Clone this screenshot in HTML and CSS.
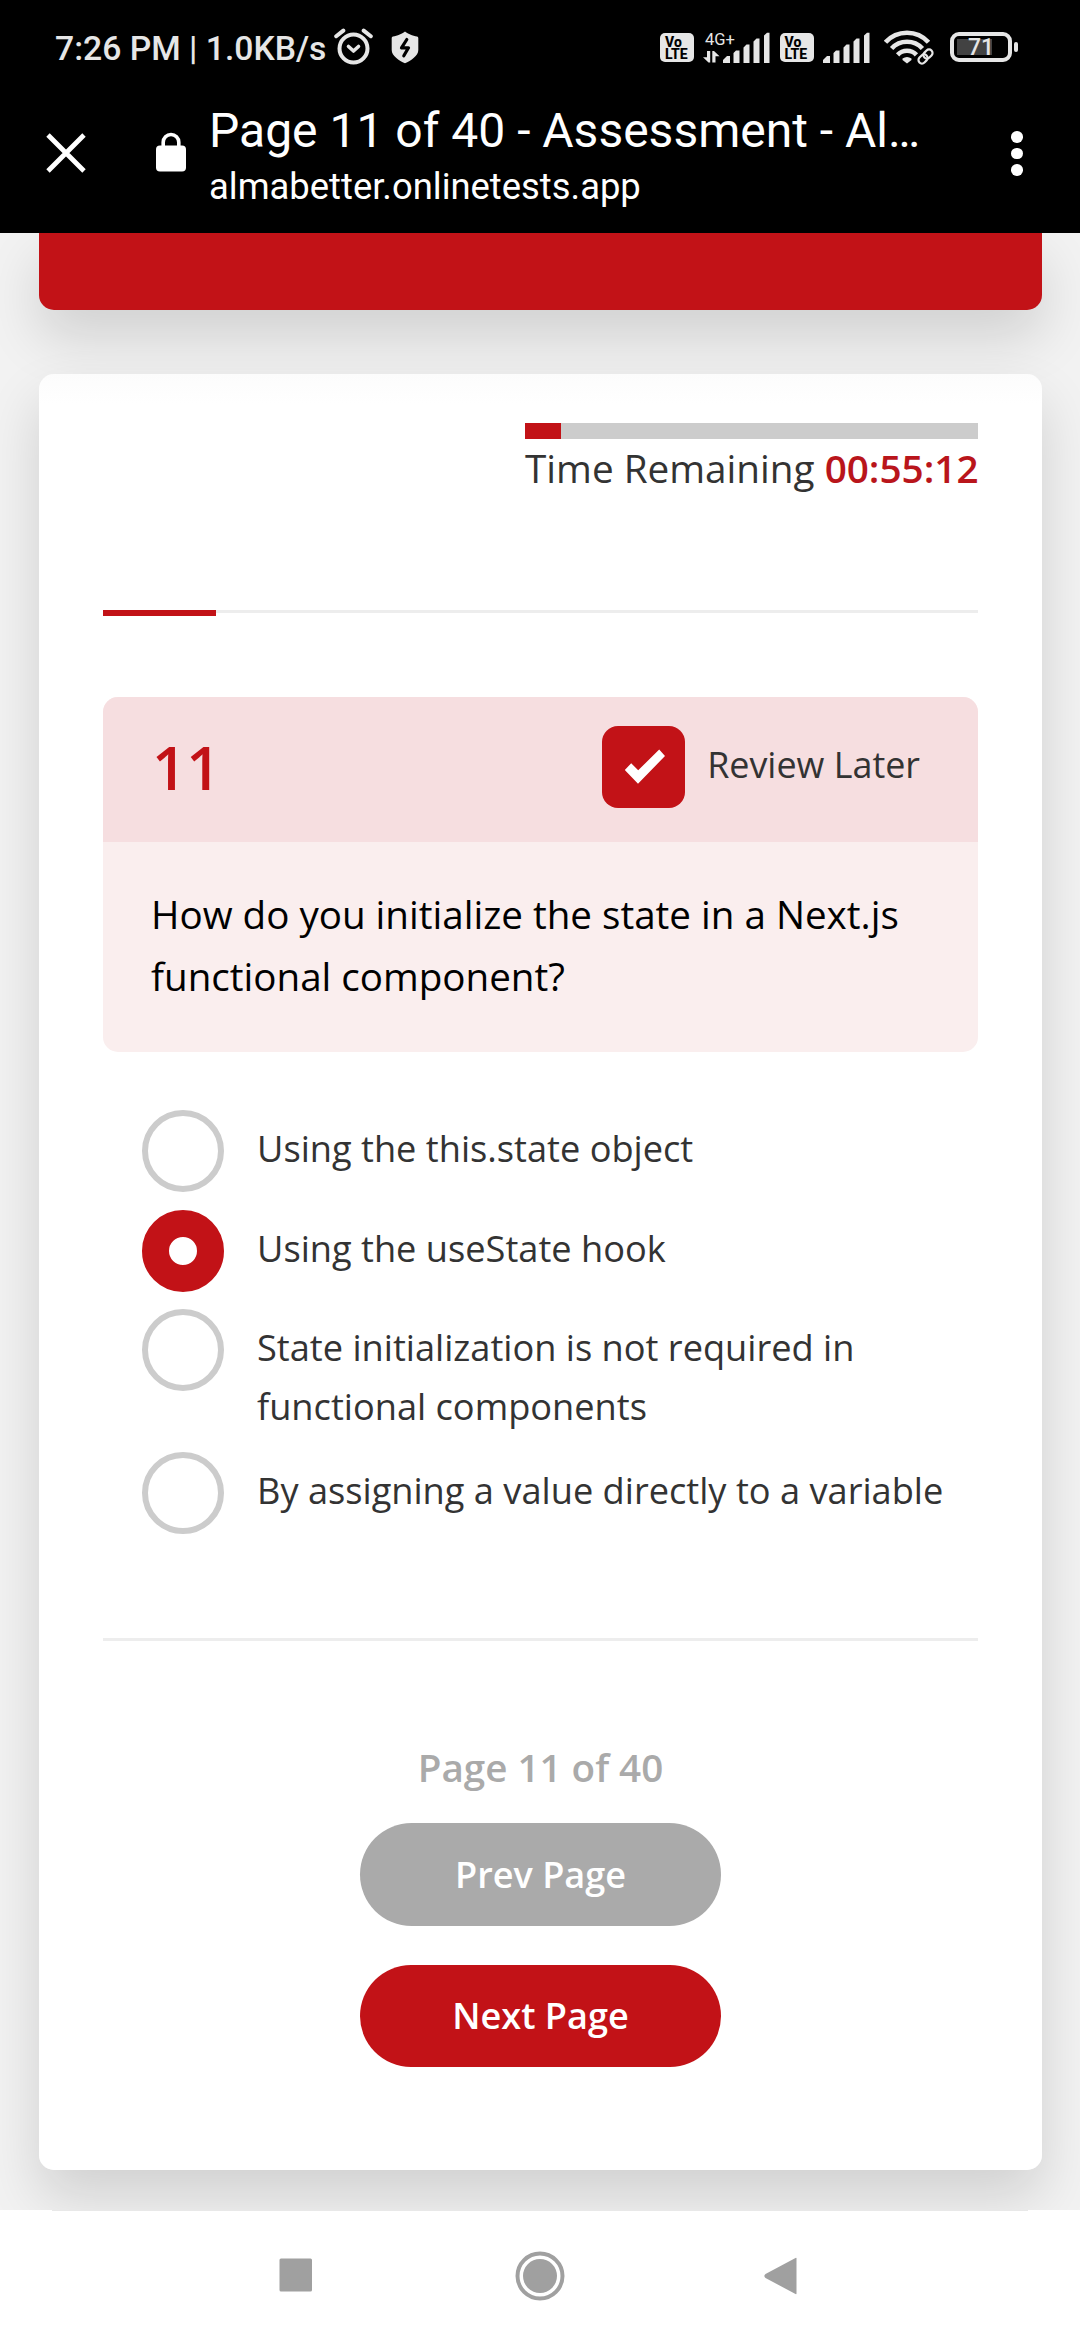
FILE: index.html
```html
<!DOCTYPE html>
<html lang="en">
<head>
<meta charset="utf-8">
<title>Page 11 of 40 - Assessment - AlmaBetter</title>
<link rel="stylesheet" href="styles.css">
</head>
<body>
<div class="screen">
  <header class="chrome">
    <div class="status">
      <span class="clock">7:26 PM | 1.0KB/s</span>
      <svg class="alarm" width="40" height="38" viewBox="0 0 40 38" fill="none" stroke="#e6e6e6" stroke-linecap="round">
        <circle cx="19.5" cy="20.5" r="14" stroke-width="4"/>
        <path d="M2.2 8.2 9.3 2.6M36.8 8.2 29.7 2.6" stroke-width="4"/>
        <path d="M14.5 18.5 19.5 23 24.5 18.5" stroke-width="3.6" stroke-linejoin="round"/>
      </svg>
      <svg class="shield" width="28" height="33" viewBox="0 0 28 33">
        <path d="M14 .5C16 2.500 22 5 26 5.500Q27.300 5.800 27.300 7V19C27.300 25 20 29.500 14 32.300 8 29.500 .7 25 .7 19V7Q.7 5.800 2 5.500C6 5 12 2.500 14 .5Z" fill="#e6e6e6"/>
        <path d="M15.800 8.500 10.500 16.800H17.500L12.800 24.800" fill="none" stroke="#000" stroke-width="3.200" stroke-linejoin="round" stroke-linecap="round"/>
      </svg>
      <span class="volte first"><span>Vo</span><span>LTE</span></span>
      <span class="network">
        <span class="net-label">4G+</span>
        <svg width="17" height="12" viewBox="0 0 17 12" fill="#e6e6e6"><path d="M4 0H7.200V11.500H5.500L0 6.200H4ZM9.300 0H11L16.500 5.300H12.500V11.500H9.300Z"/></svg>
      </span>
      <svg class="bars" width="48" height="32" viewBox="0 0 48 32" fill="#e6e6e6">
        <path d="M0 31V28L4 24H7V31ZM10.500 31V21L13 18.500H16.500V31ZM20.500 31V15.500L23.500 12.500H26.500V31ZM30.500 31V9.500L33.500 6.500H36.500V31ZM41 31V3.500L44 .8H46.500V31Z"/>
      </svg>
      <span class="volte second"><span>Vo</span><span>LTE</span></span>
      <svg class="bars second" width="48" height="32" viewBox="0 0 48 32" fill="#e6e6e6">
        <path d="M0 31V28L4 24H7V31ZM10.500 31V21L13 18.500H16.500V31ZM20.500 31V15.500L23.500 12.500H26.500V31ZM30.500 31V9.500L33.500 6.500H36.500V31ZM41 31V3.500L44 .8H46.500V31Z"/>
      </svg>
      <svg class="wifi" width="50" height="36" viewBox="0 0 50 36" fill="none">
        <g stroke="#e6e6e6" stroke-width="4.600">
          <path d="M1.500 13.300A29 29 0 0 1 44.500 13.300"/>
          <path d="M7.600 19.500A21 21 0 0 1 38.400 19.500"/>
          <path d="M13.600 25.800A13 13 0 0 1 32.400 25.800"/>
        </g>
        <path d="M18.500 29.500Q23 26.500 27.500 29.500V31L23 34.500 18.500 31Z" fill="#e6e6e6"/>
        <g transform="rotate(-45 41.500 27.500)">
          <rect x="32" y="23.700" width="11" height="7.600" rx="3.800" stroke="#000" stroke-width="5"/>
          <rect x="33" y="24" width="10" height="7" rx="3.500" stroke="#e6e6e6" stroke-width="2.200"/>
          <rect x="40" y="24" width="10" height="7" rx="3.500" stroke="#e6e6e6" stroke-width="2.200"/>
        </g>
      </svg>
      <span class="battery"><span class="level">71</span></span>
      <span class="battery-tip"></span>
    </div>
    <div class="toolbar">
      <svg class="close" width="40" height="40" viewBox="0 0 40 40" stroke="#fff" stroke-width="4.800"><path d="M2 2 38 38M38 2 2 38"/></svg>
      <svg class="lock" width="30" height="40" viewBox="0 0 30 40"><rect y="13.500" width="30" height="26" rx="4" fill="#fff"/><path d="M7.200 14V10.300A7.800 7.800 0 0 1 22.800 10.300V14" fill="none" stroke="#fff" stroke-width="3.600"/></svg>
      <div class="heading">
        <div class="title">Page 11 of 40 - Assessment - Al…</div>
        <div class="url">almabetter.onlinetests.app</div>
      </div>
      <div class="more"><i></i><i></i><i></i></div>
    </div>
  </header>

  <main class="page">
    <section class="banner"></section>
    <section class="card">
      <div class="timer">
        <div class="timer-track"><div class="timer-fill"></div></div>
        <div class="timer-text">Time Remaining <b>00:55:12</b></div>
      </div>
      <div class="progress"><div class="progress-fill"></div></div>

      <div class="question">
        <div class="question-head">
          <span class="number">11</span>
          <label class="review">
            <span class="checkbox"><svg width="42" height="36" viewBox="0 0 42 36"><path d="M1.800 21 8.200 14.300 15.200 21.300 36.200 .5 42 7 15 34.700Z" fill="#fff"/></svg></span>
            <span class="review-text">Review Later</span>
          </label>
        </div>
        <p class="question-text">How do you initialize the state in a Next.js functional component?</p>
      </div>

      <ul class="options">
        <li><span class="radio"></span><span class="option-text">Using the this.state object</span></li>
        <li><span class="radio checked"></span><span class="option-text">Using the useState hook</span></li>
        <li><span class="radio"></span><span class="option-text">State initialization is not required in functional components</span></li>
        <li><span class="radio"></span><span class="option-text">By assigning a value directly to a variable</span></li>
      </ul>

      <div class="pager">
        <div class="page-label">Page 11 of 40</div>
        <button class="btn prev">Prev Page</button>
        <button class="btn next">Next Page</button>
      </div>
    </section>
  </main>

  <nav class="navbar">
    <svg width="34" height="34" viewBox="0 0 34 34"><rect x=".5" y=".5" width="32.500" height="33" rx="1.500" fill="#a0a0a0"/></svg>
    <svg class="home" width="50" height="50" viewBox="0 0 50 50"><circle cx="25" cy="25" r="22.500" fill="none" stroke="#a0a0a0" stroke-width="4"/><circle cx="25" cy="25" r="17" fill="#a0a0a0"/></svg>
    <svg class="back" width="34" height="38" viewBox="0 0 34 38"><path d="M31.500 1Q32.500 .5 32.500 1.500V36.500Q32.500 37.500 31.500 37L1.500 21Q-.8 19 1.500 17Z" fill="#a0a0a0"/></svg>
  </nav>
</div>
</body>
</html>
```
FILE: styles.css
```css
* { box-sizing: border-box; }
body { margin: 0; background: #fff; }
.screen {
  width: 1080px;
  height: 2340px;
  display: flex;
  flex-direction: column;
  overflow: hidden;
  font-family: "Open Sans", "Noto Sans", sans-serif;
  color: #333;
}
svg { display: block; flex: none; }

/* system status bar and browser toolbar */
.chrome {
  height: 233px;
  flex: none;
  background: #000;
  color: #fff;
  font-family: Roboto, sans-serif;
}
.status {
  height: 95px;
  display: flex;
  align-items: flex-start;
  padding: 28px 0 0 55px;
  color: #e6e6e6;
}
.clock {
  width: 279px;
  font-size: 33.700px;
  line-height: 42px;
  font-weight: 500;
  white-space: nowrap;
}
.shield { margin: 3px 0 0 17px; }
.volte {
  width: 34px;
  height: 29px;
  margin-top: 5px;
  padding: 3px 0 0 5px;
  flex: none;
  display: flex;
  flex-direction: column;
  background: #e6e6e6;
  border-radius: 5px;
  color: #000;
  font-size: 14px;
  line-height: 12px;
  font-weight: 800;
}
.volte.first { margin-left: 241px; }
.volte.second { margin-left: 9px; }
.network { width: 28.500px; display: flex; flex-direction: column; padding: 0 0 0 9px; }
.net-label { font-size: 16.500px; line-height: 23px; padding-left: 2px; }
.bars { margin: 4px 0 0 0; }
.bars.second { margin-left: 9.500px; }
.wifi { margin: 1px 0 0 13px; }
.battery {
  width: 62px;
  height: 30px;
  margin: 4px 0 0 16px;
  padding: 3px;
  border: 4px solid #e6e6e6;
  border-radius: 9px;
  flex: none;
}
.level {
  display: block;
  width: 35px;
  height: 16px;
  padding-left: 11px;
  background: #424242;
  font-size: 23px;
  line-height: 17px;
  font-weight: 500;
}
.battery-tip { width: 4px; height: 10px; margin: 14px 0 0 2px; border-radius: 2px; background: #e6e6e6; }

.toolbar { display: flex; align-items: flex-start; padding-left: 46px; }
.close { margin-top: 38px; }
.lock { margin: 37px 0 0 70px; }
.heading { width: 750px; margin-left: 23px; white-space: nowrap; }
.title { font-size: 48px; line-height: 60px; padding-top: 6px; }
.url { font-size: 36.400px; line-height: 44px; padding-top: 4px; }
.more { display: flex; flex-direction: column; gap: 5px; margin: 36px 0 0 52px; }
.more i { width: 11.500px; height: 11.500px; border-radius: 50%; background: #fff; }

/* web page */
.page {
  height: 1977px;
  flex: none;
  padding: 0 38px 0 39px;
  background: #f2f2f2;
  overflow: hidden;
}
.banner {
  height: 77px;
  background: #c21217;
  border-radius: 0 0 15px 15px;
  box-shadow: 0 27px 55px rgba(0, 0, 0, .14);
}
.card {
  height: 1796px;
  margin-top: 64px;
  padding: 49px 64px 0;
  border-radius: 15px;
  background: linear-gradient(#fcfcfc, #fff 30px);
  box-shadow: 0 27px 55px rgba(0, 0, 0, .14);
}
.timer { width: 453px; margin-left: auto; }
.timer-track { height: 16px; background: #ccc; }
.timer-fill { width: 36px; height: 16px; background: #c21217; }
.timer-text {
  margin-top: 3px;
  font-size: 38.700px;
  line-height: 52px;
  white-space: nowrap;
}
.timer-text b { font-weight: 600; color: #b9151b; }
.progress { height: 6px; margin-top: 116px; border-top: 3px solid #ededed; }
.progress-fill { width: 113px; height: 6px; margin-top: -3px; background: #c21217; }

.question { margin-top: 81px; border-radius: 15px; overflow: hidden; background: #faeeee; }
.question-head {
  height: 145px;
  display: flex;
  align-items: flex-start;
  justify-content: space-between;
  padding: 29px 58px 0 49px;
  background: #f6dee0;
}
.number { margin-top: 11px; font-size: 60px; line-height: 60px; font-weight: 600; color: #c21217; }
.review { display: flex; align-items: flex-start; }
.checkbox {
  width: 83px;
  height: 82px;
  display: grid;
  place-items: center;
  border-radius: 16px;
  background: #c21217;
}
.review-text { margin: 14px 0 0 22px; font-size: 35.900px; line-height: 50px; }
.question-text {
  margin: 0;
  padding: 41px 40px 45px 48px;
  font-size: 38.600px;
  line-height: 62px;
  color: #000;
}

.options {
  list-style: none;
  margin: 0;
  padding: 58px 0 104px 39px;
  display: flex;
  flex-direction: column;
  gap: 17.500px;
}
.options li { display: flex; align-items: flex-start; gap: 33px; }
.radio { width: 82px; height: 82px; flex: none; border: 6px solid #ccc; border-radius: 50%; }
.radio.checked { border: 27px solid #c21217; }
.option-text { margin-top: 9px; margin-bottom: -1px; font-size: 36.200px; line-height: 58.500px; }

.pager {
  border-top: 3px solid #ededed;
  padding-top: 100px;
  display: flex;
  flex-direction: column;
  align-items: center;
}
.page-label { font-size: 38.600px; line-height: 52px; font-weight: 600; color: #aaa; }
.btn {
  width: 361px;
  border: 0;
  border-radius: 52px;
  padding: 0 0 2px;
  font: 600 36.100px "Open Sans", sans-serif;
  color: #fff;
}
.prev { height: 103px; margin-top: 30px; padding-bottom: 0; background: #aaa; }
.next { height: 102px; margin-top: 39px; background: #c21217; }

/* Android navigation */
.navbar {
  height: 130px;
  display: flex;
  align-items: flex-start;
  margin: 0 52px;
  padding: 47px 0 0 227px;
  border-top: 1px solid #e8e8e8;
}
.home { margin: -7px 0 0 202px; }
.back { margin: -1px 0 0 199px; }
```
